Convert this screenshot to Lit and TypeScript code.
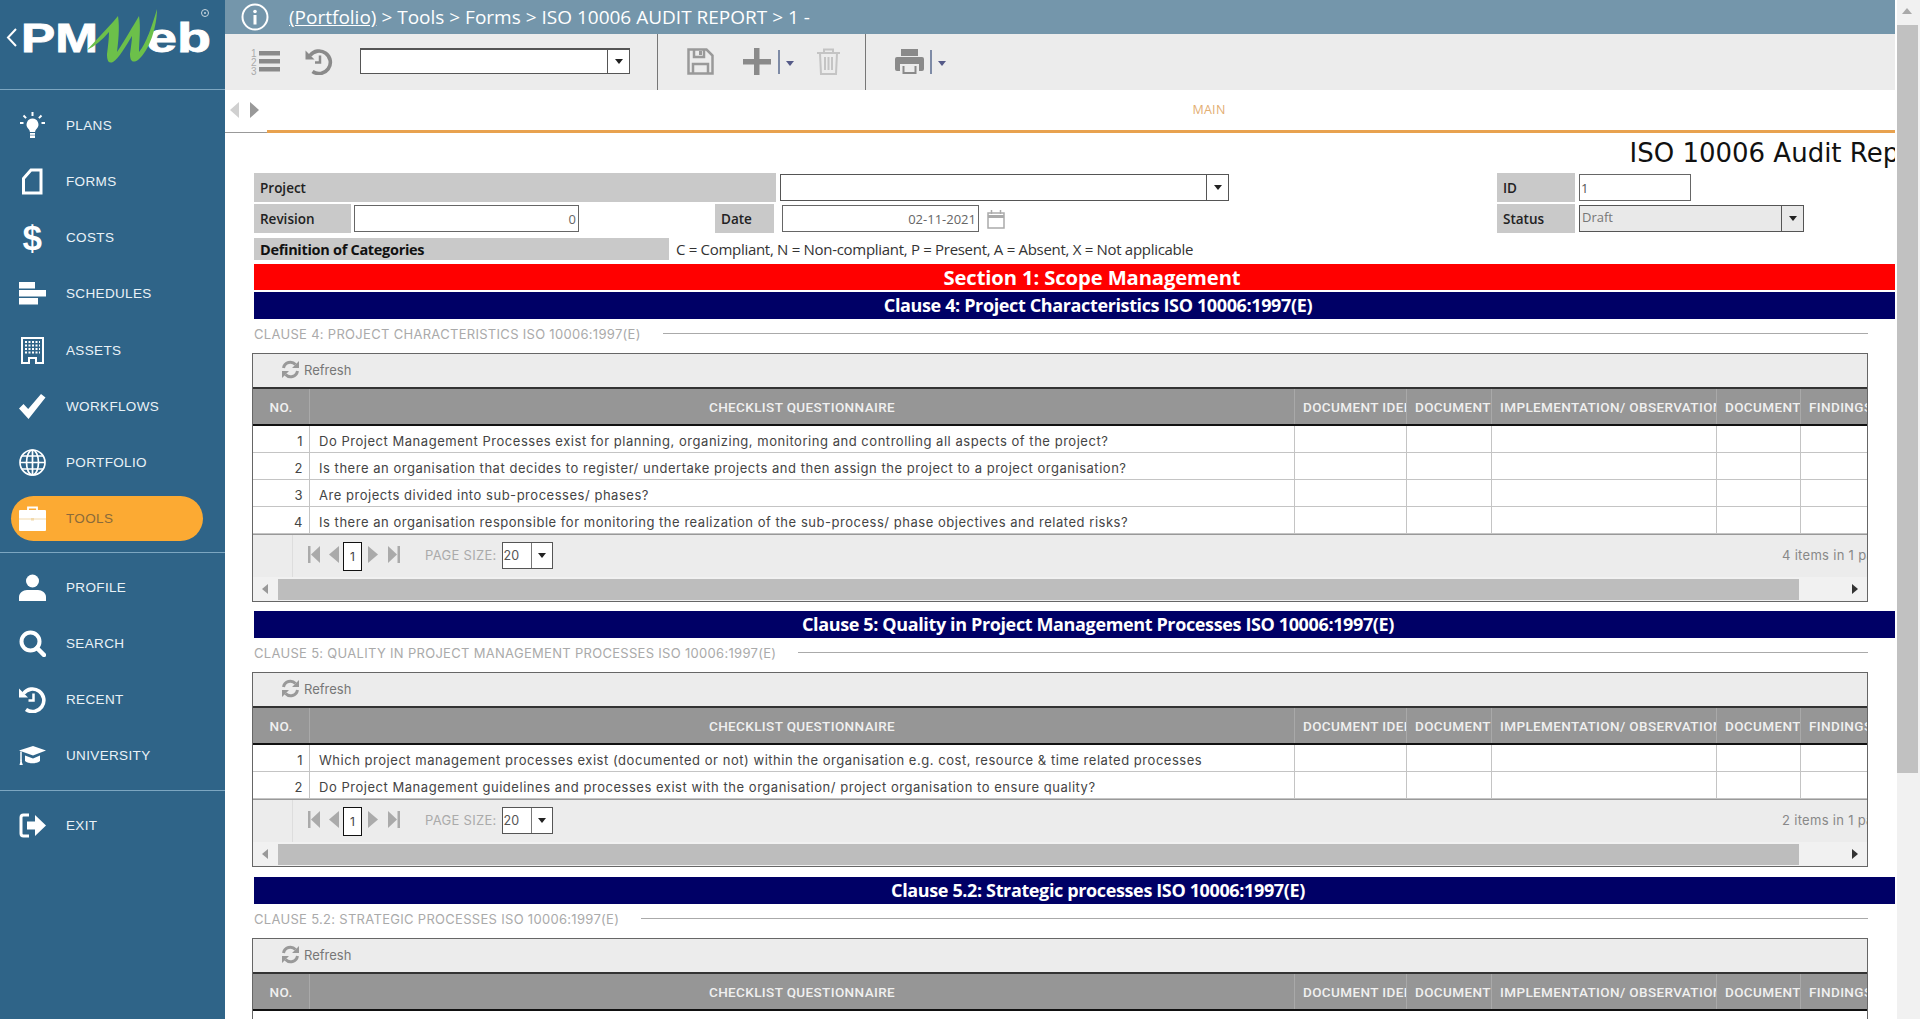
import { LitElement, html, css, svg } from "lit";
import { customElement } from "lit/decorators.js";

const W = "#fff";
const icons: Record<string, unknown> = {
  plans: svg`<svg class="ic" viewBox="0 0 27 27" fill="${W}"><path d="M13.5 6.5a6 6 0 0 0-4.2 10.2c1 1.1 1.5 2 1.6 3.3h5.2c.1-1.3.6-2.2 1.6-3.3A6 6 0 0 0 13.5 6.5z"/><rect x="11" y="21" width="5" height="1.8"/><rect x="11" y="23.4" width="5" height="2.6"/><path d="M13.5 0v4M4.5 3.5l2.6 2.6M22.5 3.5l-2.6 2.6M1 11h3.5M22.5 11H26" stroke="${W}" stroke-width="2" fill="none"/></svg>`,
  forms: svg`<svg class="ic" viewBox="0 0 27 27" fill="none" stroke="${W}" stroke-width="3"><path d="M4.5 10.5 12 2h10v23H4.5z"/></svg>`,
  schedules: svg`<svg class="ic" viewBox="0 0 27 27" fill="${W}"><rect x="0" y="2" width="16" height="6.5"/><rect x="0" y="10" width="27" height="6.5"/><rect x="0" y="18" width="19" height="6.5"/></svg>`,
  assets: svg`<svg class="ic" viewBox="0 0 27 27" fill="${W}" fill-rule="evenodd"><path d="M2 0h23v27H16v-5h-5v5H2zM4 2v23h5v-5h9v5h5V2z"/><path d="M6 4h15v2H6zM6 7.500h15v2H6zM6 11h15v2H6zM6 14.500h15v2H6z"/><path d="M8 3h1.500v14H8zM11.500 3h1.500v14h-1.500zM15 3h1.500v14H15zM18.500 3H20v14h-1.500z" fill="#2f6488"/></svg>`,
  workflows: svg`<svg class="ic" viewBox="0 0 27 27" fill="${W}"><path d="M0 15.500 4.500 11l4.700 5L22 1l4.500 3.500L9.500 26z"/></svg>`,
  portfolio: svg`<svg class="ic" viewBox="0 0 27 27" fill="none" stroke="${W}" stroke-width="1.700"><circle cx="13.500" cy="13.500" r="12.500"/><ellipse cx="13.500" cy="13.500" rx="6" ry="12.500"/><path d="M13.500 1v25M1 13.500h25M3 7h21M3 20h21"/></svg>`,
  tools: svg`<svg class="ic" viewBox="0 0 27 27"><path d="M9 5V2.500h9V5" fill="none" stroke="${W}" stroke-width="1.800"/><rect x="0" y="5" width="27" height="21" rx="1" fill="${W}"/><path d="M0 14h27" stroke="#f2d9ab" stroke-width="1"/><rect x="12" y="13" width="3" height="2.500" fill="#f2d9ab"/></svg>`,
  profile: svg`<svg class="ic" viewBox="0 0 27 27" fill="${W}"><circle cx="13.500" cy="7" r="6.500"/><path d="M0 27v-4c0-4 4-7 8-7h11c4 0 8 3 8 7v4z"/></svg>`,
  search: svg`<svg class="ic" viewBox="0 0 27 27" fill="none" stroke="${W}"><circle cx="11.500" cy="11.500" r="9" stroke-width="4"/><path d="M18 18l7 7" stroke-width="4.500" stroke-linecap="round"/></svg>`,
  recent: svg`<svg class="ic" viewBox="0 0 27 27" fill="none" stroke="${W}" stroke-width="3.600"><path d="M4.500 7.500A11.300 11.300 0 1 1 7 23.500"/><path d="M0 2.500v9h9z" fill="${W}" stroke="none"/><path d="M14.500 7.500v7h-5" stroke-width="2.500"/></svg>`,
  university: svg`<svg class="ic" viewBox="0 0 27 27" fill="${W}"><path d="M0 8.500 14 4l13 4.500-13 5zM6 13.500l8 3 7-3v5.500c-3 3-12 3-15 0z"/><path d="M2 9.500v10" stroke="${W}" stroke-width="1.500"/><path d="M.5 23 2 17l1.800 6z"/></svg>`,
  exit: svg`<svg class="ic" viewBox="0 0 27 27"><path d="M10 3H4.500Q2 3 2 5.500v16Q2 24 4.500 24H10" fill="none" stroke="${W}" stroke-width="3"/><path d="M8 9.500h8V3l11 10.500L16 24v-6.500H8z" fill="${W}"/></svg>`,
};

const NAV1: [string, string][] = [["plans","PLANS"],["forms","FORMS"],["costs","COSTS"],["schedules","SCHEDULES"],["assets","ASSETS"],["workflows","WORKFLOWS"],["portfolio","PORTFOLIO"],["tools","TOOLS"]];
const NAV2: [string, string][] = [["profile","PROFILE"],["search","SEARCH"],["recent","RECENT"],["university","UNIVERSITY"]];
const HEADS = ["NO.","CHECKLIST QUESTIONNAIRE","DOCUMENT IDENTIFICATION","DOCUMENT REFERENCE","IMPLEMENTATION/ OBSERVATIONS","DOCUMENT REVIEW","FINDINGS"];

@customElement("app-root")
export class AppRoot extends LitElement {
  static styles = css`
    :host { display:block; width:1920px; height:1019px; overflow:hidden; background:#fff; font-family:"Open Sans",sans-serif; position:relative; }
    * { box-sizing:border-box; }
    .page { display:flex; width:1920px; height:1019px; }
    .side { width:225px; flex:none; background:#2f6488; color:#eaf2f7; display:flex; flex-direction:column; font-family:"Liberation Sans",sans-serif; }
    .logo { height:90px; flex:none; border-bottom:1px solid #7ca6c1; }
    .logo svg { display:block; }
    .group { padding:6px 0; display:flex; flex-direction:column; }
    .group.first { padding:7px 0 5px; }
    .group + .group { border-top:1px solid #7ca6c1; }
    .item { height:56.25px; display:flex; align-items:center; padding-left:19px; font-size:13.5px; letter-spacing:.35px; position:relative; }
    .iconbox { width:27px; height:27px; margin-right:20px; display:flex; align-items:center; justify-content:center; flex:none; position:relative; }
    .ic { width:27px; height:27px; display:block; }
    .dollar { font:700 35px "Liberation Sans",sans-serif; color:#fff; line-height:27px; }
    .item.active { color:#8a6a3a; }
    .item.active::before { content:""; position:absolute; left:11px; width:192px; top:5.500px; height:45px; border-radius:23px; background:#fcaa33; }
    .item.active > * { position:relative; }
    .col { width:1670px; flex:none; display:flex; flex-direction:column; overflow:hidden; }
    .crumb { height:34px; background:#7496ab; color:#fff; display:flex; align-items:center; padding-left:16px; font-size:19px; flex:none; white-space:nowrap; }
    .crumb u { margin-left:20px; }
    .crumb span { white-space:pre; }
    .info { width:28px; height:28px; display:block; flex:none; }
    .bar { height:56px; flex:none; background:#ececec; display:flex; align-items:flex-start; position:relative; }
    .tb { display:block; flex:none; margin-top:14px; }
    .combo { display:flex; align-items:stretch; background:#fff; border:1px solid #555; border-top-width:2px; }
    .combo .val { flex:1; min-width:0; font-size:13px; color:#777; padding-left:2px; line-height:23px; overflow:hidden; }
    .combo .arr { width:22px; flex:none; border-left:1px solid #555; display:flex; align-items:center; justify-content:center; }
    .tri { width:0; height:0; border-left:4.500px solid transparent; border-right:4.500px solid transparent; border-top:5px solid #222; }
    .tri.sm { border-left-width:4px; border-right-width:4px; border-top-width:5px; border-top-color:#555a88; flex:none; }
    .sep { width:1px; height:56px; background:#777; flex:none; }
    .vl { width:1.500px; height:24px; background:#7e8ba6; flex:none; margin-top:16px; }
    .tabs { height:43px; flex:none; display:flex; position:relative; }
    .arrows { width:42px; flex:none; border-bottom:1px solid #999; display:flex; gap:11px; padding:12px 0 0 5px; height:43px; }
    .tabmain { flex:1; border-bottom:3px solid #e8a24f; height:43px; text-align:center; font-size:12.500px; color:#e3ae72; line-height:40px; letter-spacing:.3px; padding-left:256px; }
    .scroller { flex:1; overflow:hidden; padding-left:29px; }
    .inner { width:1688px; }
    .title { height:40px; text-align:right; font:26px "DejaVu Sans",sans-serif; color:#111; line-height:40px; white-space:nowrap; padding-right:6px; }
    .row { display:flex; align-items:flex-start; }
    .lbl { background:#c9c9c9; color:#222; font-size:13.500px; font-weight:600; padding-left:6px; flex:none; display:flex; align-items:center; }
    .fld { border:1px solid #666; background:#fff; flex:none; font-size:13px; color:#666; display:flex; align-items:center; }
    .combo.fld { align-items:stretch; border-color:#555; }
    .r1 { height:31px; }
    .r1 .lbl { height:29px; }
    .r2 { height:34px; }
    .r2 .lbl { height:29px; }
    .r3 { height:26px; }
    .r3 .lbl { height:22px; font-weight:700; font-size:14.500px; color:#111; letter-spacing:-.3px; }
    .defs { font-size:15px; color:#333; margin-left:7px; line-height:22px; letter-spacing:-.3px; white-space:nowrap; }
    .redbar { height:26px; background:#f00; color:#fff; text-align:center; font-weight:700; font-size:20.200px; line-height:26px; padding-right:12px; margin-bottom:2px; letter-spacing:-.1px; }
    .navy { height:27px; background:#000066; color:#fff; text-align:center; font-weight:700; font-size:18px; line-height:26px; letter-spacing:-.37px; }
    .sect { display:flex; align-items:center; gap:22px; height:29px; margin-bottom:5px; width:1614px; font:13px Inter,sans-serif; color:#aaa; letter-spacing:.3px; white-space:nowrap; }
    .sect i { flex:1; height:1px; background:#aaa; }
    .grid { width:1616px; margin-left:-2px; border:1px solid #666; overflow:hidden; background:#fff; font-family:Inter,sans-serif; }
    .gtool { height:33px; background:#ececec; display:flex; align-items:center; padding:0 0 2px 28px; gap:4px; color:#777; font-size:13px; }
    .ghead, .grow { display:grid; grid-template-columns:56px 985px 112px 85px 225px 84px 67px; }
    .ghead { height:39px; background:#969696; border-top:2px solid #333; border-bottom:2px solid #111; font:500 13.500px Roboto,sans-serif; color:#f0f0f0; letter-spacing:.38px; }
    .ghead div { display:flex; align-items:center; justify-content:center; border-left:1px solid #a9a9a9; overflow:hidden; white-space:nowrap; }
    .ghead div:first-child { border-left:none; }
    .ghead div.cl { justify-content:flex-start; padding-left:8px; }
    .grow { height:27px; border-bottom:1px solid #c4c4c4; font-size:13px; color:#444; letter-spacing:.53px; }
    .grow div { border-left:1px solid #c4c4c4; display:flex; align-items:center; padding:3px 0 0 9px; white-space:nowrap; overflow:hidden; }
    .grow div:first-child { border-left:none; justify-content:flex-end; padding:3px 6px 0 0; }
    .pager { height:43px; border-top:1px solid #999; background:#ececec; display:flex; align-items:flex-start; font-family:Inter,sans-serif; font-size:13px; color:#aaa; position:relative; white-space:nowrap; }
    .pleft { width:40px; height:42px; border-right:1px solid #ddd; flex:none; }
    .pg { display:block; flex:none; margin-top:11px; }
    .pnum { width:19px; height:29px; border:1px solid #111; background:#fff; margin:7px 6px 0 4px; font-size:12px; color:#444; display:flex; align-items:center; justify-content:center; flex:none; }
    .ps { margin:12px 5px 0 25px; letter-spacing:.3px; }
    .pd { width:51px; height:27px; border:1px solid #555; background:#fff; display:flex; margin-top:7px; color:#555; font-size:12.500px; flex:none; }
    .pd span { width:29px; border-right:1px solid #777; padding:5px 0 0 1px; }
    .pd b { flex:1; display:flex; align-items:center; justify-content:center; }
    .items { position:absolute; left:1529px; top:12px; color:#888; letter-spacing:.3px; font-size:13px; }
    .gscroll { height:24px; background:#f1f1f1; display:flex; align-items:center; position:relative; padding-left:25px; }
    .thumb { width:1521px; height:21px; background:#bdbdbd; }
    .ga { position:absolute; top:7px; width:0; height:0; border-top:5px solid transparent; border-bottom:5px solid transparent; }
    .ga.l { left:9px; border-right:6px solid #999; }
    .ga.r { right:9px; border-left:6px solid #333; }
    .vs { flex:1; position:relative; background:#f1f1f1; margin-left:2px; }
    .vs .up { position:absolute; left:5px; top:8px; width:0; height:0; border-left:5px solid transparent; border-right:5px solid transparent; border-bottom:6px solid #a9a9a9; }
    .vs .th { position:absolute; left:0; right:2px; top:25px; height:748px; background:#c1c1c1; }
    .gap9 { margin-top:9px; }
    .gap10 { margin-top:10px; }
  `;

  private grid(rows: string[], extra: string, h: number) {
    return html`<div class="grid" style="height:${h}px">
      <div class="gtool"><svg width="19" height="19" viewBox="0 0 19 19" fill="none" stroke="#999" stroke-width="3"><path d="M2.500 8a7 7 0 0 1 12-3.500"/><path d="M16.500 11a7 7 0 0 1-12 3.500"/><path d="M18 1v7h-7zM1 18v-7h7z" fill="#999" stroke="none"/></svg><span>Refresh</span></div>
      <div class="ghead">${HEADS.map((t, i) => html`<div class=${i > 1 ? "cl" : ""}>${t}</div>`)}</div>
      ${rows.map((r, i) => html`<div class="grow"><div>${i + 1}</div><div>${r}</div><div></div><div></div><div></div><div></div><div></div></div>`)}
      ${rows.length ? html`<div class="pager">
        <div class="pleft"></div>
        <svg class="pg" style="margin-left:15px" width="12" height="17" viewBox="0 0 12 17" fill="#aaa"><rect width="2.500" height="17"/><path d="M12 0v17L3 8.500z"/></svg>
        <svg class="pg" style="margin-left:9px" width="10" height="17" viewBox="0 0 10 17" fill="#aaa"><path d="M10 0v17L0 8.500z"/></svg>
        <div class="pnum">1</div>
        <svg class="pg" width="10" height="17" viewBox="0 0 10 17" fill="#aaa"><path d="M0 0v17l10-8.500z"/></svg>
        <svg class="pg" style="margin-left:10px" width="12" height="17" viewBox="0 0 12 17" fill="#aaa"><rect x="9.500" width="2.500" height="17"/><path d="M0 0v17l9-8.500z"/></svg>
        <span class="ps">PAGE SIZE:</span>
        <div class="pd"><span>20</span><b><i class="tri"></i></b></div>
        <div class="items">${extra}</div>
      </div>
      <div class="gscroll"><i class="ga l"></i><div class="thumb"></div><i class="ga r"></i></div>` : ""}
    </div>`;
  }

  render() {
    const item = ([k, t]: [string, string]) => html`<div class="item ${k === "tools" ? "active" : ""}"><div class="iconbox">${k === "costs" ? html`<span class="dollar">$</span>` : icons[k]}</div><span>${t}</span></div>`;
    return html`<div class="page">
      <aside class="side">
        <div class="logo"><svg width="225" height="89" viewBox="0 0 225 89">
          <path d="M16 29l-8 8.500 8 8.500" fill="none" stroke="#fff" stroke-width="2"/>
          <text x="21" y="52" font-family="Liberation Sans" font-weight="700" font-size="40" fill="#fff" stroke="#fff" stroke-width=".8" textLength="77" lengthAdjust="spacingAndGlyphs">PM</text>
          <text x="146" y="52" font-family="Liberation Sans" font-weight="700" font-size="41" fill="#fff" stroke="#fff" stroke-width=".8" textLength="65" lengthAdjust="spacingAndGlyphs">eb</text>
          <path d="M87 50 113 22 118 16C120 28 118 44 117 52 125 40 133 26 139 16 141 28 139 42 139 52 146 44 152 26 157 9 157 26 150 50 138 60 132 64 130 60 130 54 131 46 132 40 132 36 126 46 119 58 113 62 108 64 107 60 107 54 108 46 109 38 109 32 102 40 95 46 87 50Z" fill="#6cc04a"/>
          <circle cx="205" cy="13" r="3.500" fill="none" stroke="#c9d6df" stroke-width="1"/><circle cx="205" cy="13" r="1" fill="#c9d6df"/>
        </svg></div>
        <div class="group first">${NAV1.map(item)}</div>
        <div class="group">${NAV2.map(item)}</div>
        <div class="group">${item(["exit", "EXIT"])}</div>
      </aside>
      <div class="col">
        <div class="crumb">
          <svg class="info" viewBox="0 0 28 28"><circle cx="14" cy="14" r="12.500" fill="none" stroke="#fff" stroke-width="2"/><circle cx="14" cy="8.500" r="1.800" fill="#fff"/><rect x="12.500" y="12" width="3" height="9.500" fill="#fff"/></svg>
          <u>(Portfolio)</u><span> &gt; Tools &gt; Forms &gt; ISO 10006 AUDIT REPORT &gt; 1 -</span>
        </div>
        <div class="bar">
          <svg class="tb" style="margin-left:26px" width="29" height="27" viewBox="0 0 29 27" fill="#8a8a8a"><rect x="8" y="3" width="21" height="4.500"/><rect x="8" y="11" width="21" height="4.500"/><rect x="8" y="19" width="21" height="4.500"/><text x="0" y="8.500" font-size="10" font-family="Liberation Sans" fill="#aaa">1</text><text x="0" y="17.500" font-size="10" font-family="Liberation Sans" fill="#aaa">2</text><text x="0" y="26.500" font-size="10" font-family="Liberation Sans" fill="#aaa">3</text></svg>
          <svg class="tb" style="margin-left:25px" width="28" height="27" viewBox="0 0 27 27" fill="none" stroke="#8a8a8a" stroke-width="3.600"><path d="M4.500 7.500A11.300 11.300 0 1 1 7 23.500"/><path d="M0 2.500v9h9z" fill="#8a8a8a" stroke="none"/><path d="M14.500 7.500v7h-5" stroke-width="2.500"/></svg>
          <div class="combo tb" style="margin-left:27px;width:270px;height:26px"><div class="val"></div><div class="arr"><i class="tri"></i></div></div>
          <div class="sep" style="margin-left:27px"></div>
          <svg class="tb" style="margin-left:29px" width="27" height="27" viewBox="0 0 27 27" fill="none" stroke="#999" stroke-width="2.500"><path d="M1.500 1.500h18l6 6v18h-24z"/><path d="M7 2v7h10V2M6 25v-9h15v9"/><rect x="12" y="3" width="3" height="4" fill="#999" stroke="none"/></svg>
          <svg class="tb" style="margin-left:29px" width="28" height="27" viewBox="0 0 28 27" fill="#8a8a8a"><rect x="11" width="5.500" height="27"/><rect y="11" width="28" height="5.500"/></svg>
          <div class="vl" style="margin-left:7px"></div>
          <i class="tri sm" style="margin:27px 0 0 6px"></i>
          <svg class="tb" style="margin-left:23.500px" width="23" height="27" viewBox="0 0 23 27" fill="none" stroke="#c4c4c4" stroke-width="2"><path d="M0 5h23M7 5V1.500h9V5M3 5l1 21h15l1-21M8 9v13M11.500 9v13M15 9v13"/></svg>
          <div class="sep" style="margin-left:25px"></div>
          <svg class="tb" style="margin-left:29px" width="29" height="27" viewBox="0 0 29 27" fill="#8a8a8a"><rect x="6" y="1" width="17" height="7"/><path d="M2 9h25q2 0 2 2v10q0 2-2 2h-3v-7H5v7H2q-2 0-2-2V11q0-2 2-2z"/><rect x="7.500" y="18" width="14" height="8" fill="#8a8a8a"/><rect x="9.500" y="18" width="10" height="6" fill="#ececec"/></svg>
          <div class="vl" style="margin-left:6px"></div>
          <i class="tri sm" style="margin:27px 0 0 6px"></i>
        </div>
        <div class="tabs">
          <div class="arrows">
            <svg width="9" height="16" viewBox="0 0 9 16"><path d="M9 0v16L0 8z" fill="#d0d0d0"/></svg>
            <svg width="9" height="16" viewBox="0 0 9 16"><path d="M0 0v16l9-8z" fill="#999"/></svg>
          </div>
          <div class="tabmain">MAIN</div>
        </div>
        <div class="scroller"><div class="inner">
          <div class="title">ISO 10006 Audit Report</div>
          <div class="row r1">
            <div class="lbl" style="width:522px">Project</div>
            <div class="combo fld" style="margin:1px 0 0 4px;width:449px;height:27px;"><div class="val"></div><div class="arr"><i class="tri"></i></div></div>
            <div class="lbl" style="margin-left:268px;width:78px">ID</div>
            <div class="fld" style="margin:1px 0 0 4px;width:112px;height:27px;padding-left:1px;color:#555;">1</div>
          </div>
          <div class="row r2">
            <div class="lbl" style="width:97px">Revision</div>
            <div class="fld" style="margin:1px 0 0 3px;width:225px;height:27px;justify-content:flex-end;padding-right:2px">0</div>
            <div class="lbl" style="margin-left:136px;width:59px">Date</div>
            <div class="fld" style="margin:1px 0 0 8px;width:197px;height:27px;justify-content:flex-end;padding-right:2px">02-11-2021</div>
            <svg style="margin:6px 0 0 8px;flex:none" width="18" height="19" viewBox="0 0 18 19" fill="none" stroke="#aaa" stroke-width="1.500"><rect x="1" y="3" width="16" height="15"/><path d="M1 6.500h16" stroke-width="3"/><path d="M4.500 0v4M13.500 0v4"/></svg>
            <div class="lbl" style="margin-left:492px;width:78px">Status</div>
            <div class="combo fld" style="margin:1px 0 0 4px;width:225px;height:27px;background:#e9e9e9"><div class="val">Draft</div><div class="arr"><i class="tri"></i></div></div>
          </div>
          <div class="row r3">
            <div class="lbl" style="width:415px">Definition of Categories</div>
            <div class="defs">C = Compliant, N = Non-compliant, P = Present, A = Absent, X = Not applicable</div>
          </div>
          <div class="redbar">Section 1: Scope Management</div>
          <div class="navy">Clause 4: Project Characteristics ISO 10006:1997(E)</div>
          <div class="sect">CLAUSE 4: PROJECT CHARACTERISTICS ISO 10006:1997(E)<i></i></div>
          ${this.grid([
            "Do Project Management Processes exist for planning, organizing, monitoring and controlling all aspects of the project?",
            "Is there an organisation that decides to register/ undertake projects and then assign the project to a project organisation?",
            "Are projects divided into sub-processes/ phases?",
            "Is there an organisation responsible for monitoring the realization of the sub-process/ phase objectives and related risks?",
          ], "4 items in 1 pages", 249)}
          <div class="navy gap9">Clause 5: Quality in Project Management Processes ISO 10006:1997(E)</div>
          <div class="sect">CLAUSE 5: QUALITY IN PROJECT MANAGEMENT PROCESSES ISO 10006:1997(E)<i></i></div>
          ${this.grid([
            "Which project management processes exist (documented or not) within the organisation e.g. cost, resource & time related processes",
            "Do Project Management guidelines and processes exist with the organisation/ project organisation to ensure quality?",
          ], "2 items in 1 pages", 195)}
          <div class="navy gap10">Clause 5.2: Strategic processes ISO 10006:1997(E)</div>
          <div class="sect">CLAUSE 5.2: STRATEGIC PROCESSES ISO 10006:1997(E)<i></i></div>
          ${this.grid([], "", 90)}
        </div></div>
      </div>
      <div class="vs"><i class="up"></i><div class="th"></div></div>
    </div>`;
  }
}
